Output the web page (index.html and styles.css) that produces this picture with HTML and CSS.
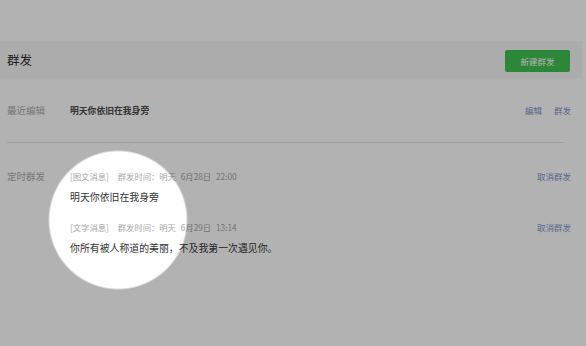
FILE: index.html
```html
<!DOCTYPE html>
<html lang="zh-CN">
<head>
    <meta charset="UTF-8">
    <meta name="viewport" content="width=device-width, initial-scale=1.0">
    <title>群发</title>
    <link rel="stylesheet" href="styles.css">
</head>
<body>
    <div class="page">
        <div class="header">
            <h1 class="title">群发</h1>
            <button class="btn-new">新建群发</button>
        </div>

        <div class="section recent">
            <div class="label">最近编辑</div>
            <div class="recent-text">明天你依旧在我身旁</div>
            <div class="links">
                <a href="#">编辑</a>
                <a href="#">群发</a>
            </div>
        </div>

        <div class="divider"></div>

        <div class="section scheduled">
            <div class="label">定时群发</div>
            <ul class="items">
                <li class="item">
                    <div class="item-body">
                        <div class="meta"><span class="kind">[图文消息]</span>群发时间：明天 6月28日 22:00</div>
                        <div class="msg">明天你依旧在我身旁</div>
                    </div>
                    <a href="#">取消群发</a>
                </li>
                <li class="item">
                    <div class="item-body">
                        <div class="meta"><span class="kind">[文字消息]</span>群发时间：明天 6月29日 13:14</div>
                        <div class="msg">你所有被人称道的美丽，不及我第一次遇见你。</div>
                    </div>
                    <a href="#">取消群发</a>
                </li>
            </ul>
        </div>
    </div>

    <div class="spotlight"></div>
</body>
</html>
```

FILE: styles.css
```css
body {
  margin: 0;
  height: 346px;
  position: relative;
  overflow: hidden;
  background: #fff;
  font-family: "Noto Sans CJK SC", "Noto Sans", sans-serif;
  color: #333;
}

.page {
  padding-top: 41px;
}

.header {
  height: 37px;
  margin-right: 4px;
  padding: 0 12px 0 7px;
  background: #f6f6f6;
  display: flex;
  align-items: center;
  justify-content: space-between;
}

.title {
  margin: 0;
  font-size: 12.5px;
  font-weight: normal;
  color: #2a2a2a;
}

.btn-new {
  width: 65px;
  height: 22px;
  margin-top: 2px;
  padding: 0;
  border: none;
  border-radius: 2px;
  background: #41c150;
  color: #fff;
  font-family: inherit;
  font-size: 8.5px;
}

.section {
  display: flex;
  padding: 0 15px 0 7px;
}

.label {
  width: 63px;
  flex-shrink: 0;
  font-size: 9.5px;
  color: #a9a9a9;
}

a {
  color: #7b94cc;
  text-decoration: none;
  font-size: 8.5px;
}

.recent {
  height: 64px;
  align-items: center;
}

.recent-text {
  flex: 1;
  font-size: 8.8px;
  font-weight: bold;
  color: #4a4a4a;
}

.links {
  display: flex;
  gap: 12px;
}

.divider {
  height: 1px;
  margin: 0 22px 0 7px;
  background: #e3e3e3;
}

.scheduled {
  padding-top: 26px;
}

.scheduled .label {
  line-height: 14px;
}

.items {
  flex: 1;
  list-style: none;
  margin: 0;
  padding: 0;
}

.item {
  display: flex;
  justify-content: space-between;
  align-items: flex-start;
  margin-bottom: 15px;
}

.item a {
  line-height: 14px;
}

.meta {
  font-size: 8.3px;
  line-height: 14px;
  word-spacing: 3px;
  color: #a6a6a6;
}

.kind {
  margin-right: 9px;
}

.msg {
  margin-top: 6px;
  font-size: 9.9px;
  line-height: 16px;
  color: #333;
}

.spotlight {
  position: absolute;
  inset: 0;
  pointer-events: none;
  background: radial-gradient(circle at 118px 220px, transparent 68px, rgba(0, 0, 0, 0.3) 70px);
}
```
